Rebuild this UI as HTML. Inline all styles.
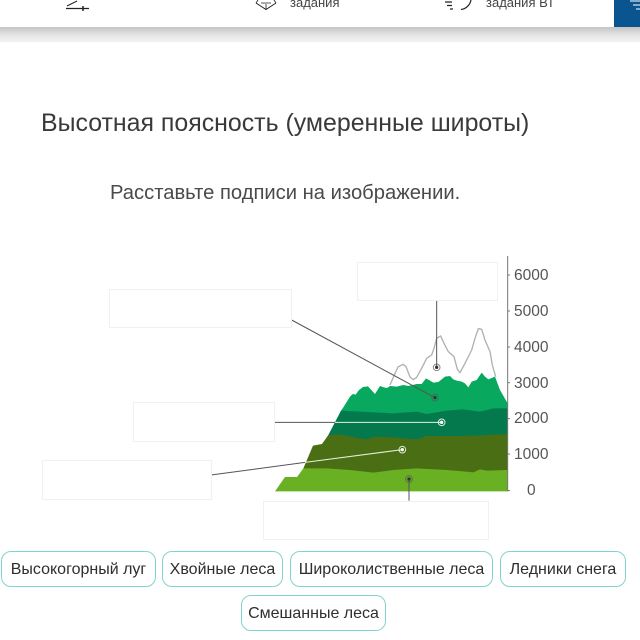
<!DOCTYPE html>
<html><head><meta charset="utf-8">
<style>
html,body{margin:0;padding:0;width:640px;height:640px;overflow:hidden;background:#fff;font-family:"Liberation Sans",sans-serif;color:#333}
.a{position:absolute;white-space:nowrap}
.box{position:absolute;background:#fff;border:1px solid #f1f1f1;box-sizing:border-box}
.chip{position:absolute;box-sizing:border-box;border:1px solid #80d4cf;border-radius:10px;background:#fff;height:36px;line-height:36px;text-align:center;font-size:16px;color:#2e2e2e;white-space:nowrap}
.n{position:absolute;font-size:15.500px;line-height:18px;color:#555}
</style></head><body>
<div class="a" style="left:0;top:27px;width:640px;height:15px;background:linear-gradient(#c4c4c4,#e6e6e6 55%,#f2f2f2)"></div>
<div class="a" style="left:614px;top:0;width:26px;height:27px;background:#0a5590"></div>
<svg class="a" style="left:0;top:0" width="640" height="640" viewBox="0 0 640 640">
<g stroke="#222" fill="none">
<path d="M67 6 L77 1" stroke-width="1"/>
<path d="M66 8.500H89" stroke-width="1.300"/><path d="M83 6V11" stroke-width="1.500"/>
<path d="M256 3 L266 9.500 L276 3" stroke-width="1"/><path d="M256 3 L258 0M276 3 L274 0M266 9.500V4M261 3H271" stroke-width=".8"/>
<path d="M445 2H452M447 5.500H452M450 9H453M461 9.500C466 9 470 5 471 0" stroke-width="1.200"/>
<path d="M630 1H640M633 5H640M636 9H640" stroke="#cfe0ee" stroke-width="1.200"/>
</g>
<g transform="translate(260,250) scale(.33333)">
<path d="M390 405L403 375L414 351L429 343L438 350L450 381L460 389L470 382L485 355L500 325L515 315L522 295L530 265L542 258L552 280L565 305L582 320L592 358L600 368L615 340L635 300L645 265L655 236L665 238L675 270L690 305L697 345L707 380" fill="none" stroke="#b0b0b0" stroke-width="4" stroke-linejoin="round"/>
<path fill="#09a85f" d="M243 482L250 472L270 440L278 432L287 434L297 420L309 411L324 409L334 420L345 432L360 408L372 412L381 414L390 408L410 410L430 405L445 408L470 402L485 402L498 385L510 392L520 398L535 396L545 388L555 380L570 378L580 388L590 392L605 395L615 400L625 412L635 395L650 390L665 368L675 380L685 388L705 380L720 420L743 460V495H300Z"/>
<path fill="#04794d" d="M243 482L300 485L400 490L470 485L500 492L560 482L610 478L660 485L700 475L743 475V580H205V555Z"/>
<path fill="#4a6e14" d="M205 555L240 553L270 560L300 565L320 568L345 560L400 562L440 566L470 568L500 558L600 558L660 556L743 552V680H400L130 655L159 587L186 582Z"/>
<path fill="#6ab023" d="M130 655L200 655L270 660L340 668L400 660L470 655L560 660L610 664L640 667L660 658L680 662L743 660V724H45L75 681L111 681Z"/>
<path d="M743 18V724M743 75H750M743 183H750M743 291H750M743 398H750M743 506H750M743 612H750M743 722H750" stroke="#777" stroke-width="3" fill="none"/>
<g stroke="#555" stroke-width="3" fill="none">
<path d="M530 152V352"/><path d="M95 210L525 443"/>
<path d="M45 517H225"/><path d="M-147 675L135 637"/><path d="M447 687V752"/>
</g>
<g stroke="#e6efe0" stroke-width="3" fill="none"><path d="M225 517H545"/><path d="M135 637L427 599"/></g>
<g fill="#333"><circle cx="530" cy="352" r="5"/><circle cx="525" cy="443" r="5"/><circle cx="447" cy="687" r="5"/></g>
<g fill="none" stroke="#555" stroke-opacity=".7" stroke-width="3"><circle cx="530" cy="352" r="10"/><circle cx="525" cy="443" r="10"/><circle cx="447" cy="687" r="10"/></g>
<g fill="#fff"><circle cx="545" cy="517" r="5"/><circle cx="427" cy="599" r="5"/></g>
<g fill="none" stroke="#fff" stroke-opacity=".85" stroke-width="3"><circle cx="545" cy="517" r="10"/><circle cx="427" cy="599" r="10"/></g>
</g>
</svg>
<div class="a" style="left:290px;top:-4px;font-size:13px;line-height:14px;color:#444">задания</div>
<div class="a" style="left:486px;top:-4px;font-size:13px;line-height:14px;color:#444">задания ВТ</div>
<div class="a" style="left:41px;top:108px;font-size:24.900px;line-height:30px;color:#3a3a3a">Высотная поясность (умеренные широты)</div>
<div class="a" style="left:110px;top:181px;font-size:20.200px;line-height:24px;color:#4a4a4a">Расставьте подписи на изображении.</div>
<div class="n" style="left:514px;top:267px">6000</div>
<div class="n" style="left:514px;top:303px">5000</div>
<div class="n" style="left:514px;top:339px">4000</div>
<div class="n" style="left:514px;top:375px">3000</div>
<div class="n" style="left:514px;top:410px">2000</div>
<div class="n" style="left:514px;top:446px">1000</div>
<div class="n" style="left:527px;top:482px">0</div>
<div class="box" style="left:357px;top:262px;width:141px;height:39px"></div>
<div class="box" style="left:109px;top:289px;width:183px;height:39px"></div>
<div class="box" style="left:133px;top:402px;width:142px;height:40px"></div>
<div class="box" style="left:42px;top:460px;width:170px;height:40px"></div>
<div class="box" style="left:263px;top:501px;width:226px;height:39px"></div>
<div class="chip" style="left:1px;top:551px;width:155px">Высокогорный луг</div>
<div class="chip" style="left:162px;top:551px;width:121px">Хвойные леса</div>
<div class="chip" style="left:290px;top:551px;width:203px">Широколиственные леса</div>
<div class="chip" style="left:500px;top:551px;width:126px">Ледники снега</div>
<div class="chip" style="left:241px;top:595px;width:145px">Смешанные леса</div>
</body></html>
